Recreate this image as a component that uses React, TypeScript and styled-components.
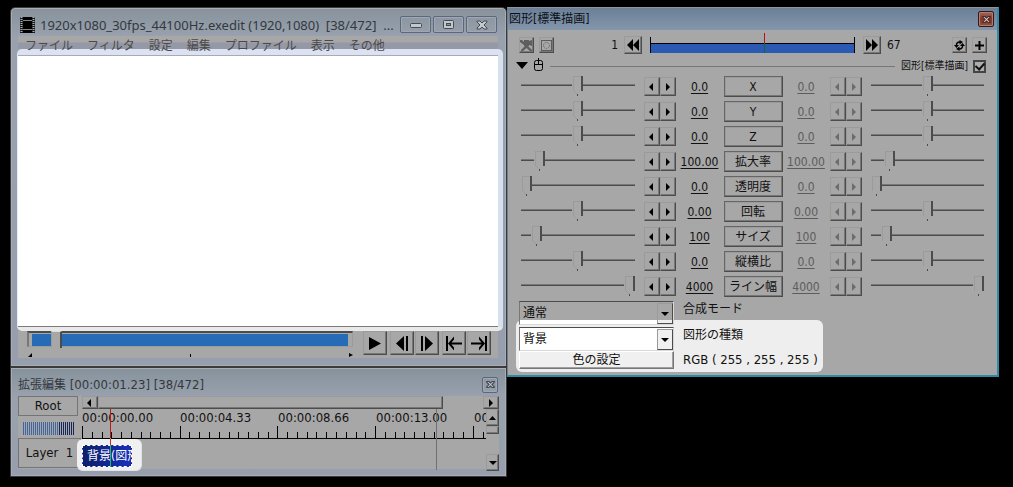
import React from "react";
import styled, { createGlobalStyle, css } from "styled-components";

const face = "#a7a7a7";
const dark = "#4c4c4c";
const mid = "#777777";
const light = "#9b9b9b";

const GlobalStyle = createGlobalStyle`
  * { box-sizing: border-box; }
  body {
    margin: 0;
    background: #000;
    color: #111;
    font-family: "DejaVu Sans Condensed", "Noto Sans CJK JP", sans-serif;
    font-size: 12px;
    line-height: 16px;
  }
  button, select, input { font: inherit; color: inherit; margin: 0; padding: 0; }
  svg { display: block; }
`;

const Desktop = styled.main`
  display: grid;
  grid-template-columns: 497fr 492fr;
  align-items: start;
  padding: 7px 14px 10px 10px;
`;

const Column = styled.div`
  min-width: 0;
`;

const glass = css`
  border: 1px solid #3a3a3a;
  box-shadow: inset 0 0 0 1px #a9adb1;
  color: #33383e;
`;

const PlayerWindow = styled.section`
  ${glass}
  border-radius: 5px 5px 0 0;
  background: linear-gradient(#87929c, #98a1ad 28px, #979fae);
  padding: 0 8px 8px 7px;
`;

const TimelineWindow = styled.section`
  ${glass}
  background: linear-gradient(#86929b, #98a1ad 28px, #979fae);
  padding: 0 7px 7px;
`;

const TitleBar = styled.header<{ $height: number }>`
  display: flex;
  align-items: center;
  height: ${(p) => p.$height}px;
  padding-top: 5px;
`;

const Title = styled.h1<{ $size?: number; $wide?: boolean }>`
  flex: 1;
  min-width: 0;
  margin: 0;
  font-family: ${(p) => (p.$wide ? '"Noto Sans", sans-serif' : "inherit")};
  font-size: ${(p) => p.$size ?? 12}px;
  font-weight: normal;
  line-height: 18px;
  white-space: pre;
`;

const TitleName = styled.span`
  font-size: 12px;
`;

const FilmIcon = styled.svg`
  margin: 0 5px 0 2px;
`;

const CaptionButtons = styled.div`
  display: flex;
  gap: 2px;
  padding: 0 1px 0 8px;
`;

const CaptionButton = styled.button<{ $w: number; $h: number; $danger?: boolean }>`
  display: grid;
  place-items: center;
  width: ${(p) => p.$w}px;
  height: ${(p) => p.$h}px;
  border: 1px solid ${(p) => (p.$danger ? "#3c1712" : "#5c6680")};
  border-radius: 2px;
  background: ${(p) => (p.$danger ? "linear-gradient(#a06a60, #8c3322 50%, #94513f)" : "transparent")};
  box-shadow: inset 0 0 0 1px ${(p) => (p.$danger ? "#a88078" : "#a0a8b2")};
`;

const MenuBar = styled.nav`
  position: relative;
  z-index: 1;
  display: flex;
  gap: 14px;
  height: 13px;
  padding-left: 7px;
  background: linear-gradient(${face} 6px, #9598a6 7px);
`;

const MenuItem = styled.button`
  height: 20px;
  border: 0;
  background: none;
  color: #4a4a4a;
  line-height: 20px;
  white-space: nowrap;
`;

const PreviewGlow = styled.div`
  margin: 0 -5px 0 -1px;
  padding: 6px 5px 4px 1px;
  border-radius: 5px;
  background: linear-gradient(#dce2f2 6px, transparent 6px, transparent 278px, #e9e9e9 278px),
    linear-gradient(90deg, #e6ecf8 1px, #fff 1px, #fff 50%, #d5e1ef 50%);
`;

const Preview = styled.div`
  height: 272px;
  border-top: 1px solid #a6abb6;
  border-bottom: 1px solid #7b7b7b;
  background: #fff;
`;

const Transport = styled.div`
  display: flex;
  justify-content: space-between;
  gap: 10px;
  height: 27px;
  padding: 0 7px 0 9px;
  background: ${face};
`;

const Seek = styled.div`
  flex: 1;
  min-width: 0;
`;

const SeekInput = styled.input`
  display: block;
  appearance: none;
  width: 100%;
  height: 16px;
  border: 1px solid ${light};
  border-width: 2px 1px 1px 2px;
  border-color: ${dark} ${light} ${light} ${mid};
  background: linear-gradient(#266bb5, #266bb5) 3px 1px / calc(100% - 7px) 12px no-repeat;
  outline: 0;
  &::-webkit-slider-thumb {
    appearance: none;
    width: 11px;
    height: 17px;
    margin-left: -3px;
    border: solid;
    border-width: 1px 2px 0 1px;
    border-color: #ddd ${dark} ${mid} ${light};
    background: ${face};
  }
`;

const SeekTicks = styled.div`
  display: flex;
  justify-content: space-between;
  padding: 6px 0 0 1px;
`;

const ButtonGroup = styled.div<{ $gap: number }>`
  display: flex;
  gap: ${(p) => p.$gap}px;
`;

const raised = css`
  border: 1px solid;
  border-color: ${light} ${dark} ${dark} ${light};
  background: ${face};
  box-shadow: inset -1px -1px 0 ${mid};
`;

const ToolButton = styled.button<{ $w: number; $h: number }>`
  ${raised}
  display: grid;
  place-items: center;
  flex: none;
  width: ${(p) => p.$w}px;
  height: ${(p) => p.$h}px;
`;

const TimelineBody = styled.div`
  display: grid;
  grid-template-columns: 64px 1fr;
  height: 73px;
  background: ${face};
  color: #111;
`;

const LayerColumn = styled.div`
  display: flex;
  flex-direction: column;
`;

const OutlineButton = styled.button<{ $w: number; $h: number }>`
  width: ${(p) => p.$w}px;
  height: ${(p) => p.$h}px;
  border: 1px solid #747474;
  background: ${face};
  font-size: 13px;
  white-space: pre;
`;

const ZoomMeter = styled.div`
  width: 51px;
  height: 13px;
  margin: 6px 0 3px 5px;
  background: repeating-linear-gradient(90deg, transparent 0 1px, ${face} 1px 2px),
    linear-gradient(90deg, #3f66a3 70%, #14265c 70%);
`;

const TrackColumn = styled.div`
  display: flex;
  flex-direction: column;
  min-width: 0;
`;

const ScrollRow = styled.div`
  display: flex;
  height: 13px;
`;

const ScrollThumb = styled.div`
  ${raised}
  flex: 345;
`;

const ScrollTrack = styled.div`
  flex: 40;
`;

const TrackArea = styled.div`
  display: flex;
  flex: 1;
  min-height: 0;
`;

const Tracks = styled.div`
  position: relative;
  flex: 1;
  min-width: 0;
`;

const Ruler = styled.div`
  height: 30px;
  overflow: hidden;
  border-bottom: 1px solid #000;
`;

const RulerLabels = styled.div`
  display: grid;
  grid-template-columns: repeat(5, 98px);
  height: 17px;
  font-size: 13px;
  line-height: 17px;
`;

const ClipGlow = styled.div`
  position: relative;
  width: 65px;
  height: 32px;
  margin-left: -5px;
  padding: 6px 5px;
  border-radius: 6px;
  background: #f0f0f0;
  border: 1px solid #dfe3e8;
  border-width: 0 1px 1px 0;
`;

const Clip = styled.div`
  width: 50px;
  height: 22px;
  padding-left: 4px;
  border: 1px dashed #fff;
  background: linear-gradient(90deg, #0e1f66, #1730bd);
  color: #fff;
  font-size: 12px;
  line-height: 20px;
  white-space: nowrap;
  overflow: hidden;
`;

const Playhead = styled.div`
  position: absolute;
  top: 0;
  left: 28px;
  width: 1px;
  height: 58px;
  background: linear-gradient(#c01818 29px, #30c8c8 29px, #30c8c8 30px, #e02020 30px, #e02020 36px, #18c060 36px);
`;

const EndMark = styled.div`
  position: absolute;
  top: 0;
  bottom: 1px;
  right: 49px;
  width: 1px;
  background: #707070;
`;

const VerticalScroll = styled.div`
  display: flex;
  flex-direction: column;
  flex: none;
  width: 13px;
`;

const VerticalThumb = styled.div`
  ${raised}
  height: 8px;
  margin-bottom: auto;
`;

const SettingsWindow = styled.section`
  min-width: 0;
  border: solid;
  border-width: 1px 2px 2px 1px;
  border-color: #8f959a #2f8aa6 #2f8aa6 #6e7f90;
  background: ${face};
  padding-bottom: 3px;
`;

const SettingsTitle = styled(TitleBar)`
  padding: 0 3px 0 1px;
  background: linear-gradient(#6b7f96, #8396ac);
  color: #0c1016;
`;

const FrameRow = styled.div`
  display: flex;
  align-items: center;
  height: 22px;
  margin-top: 4px;
  padding: 0 10px 0 11px;
`;

const FrameNumber = styled.span<{ $w: number; $right?: boolean }>`
  width: ${(p) => p.$w}px;
  padding: 0 6px;
  font-size: 12px;
  text-align: ${(p) => (p.$right ? "right" : "left")};
`;

const FrameBar = styled.div`
  position: relative;
  flex: 1;
  height: 16px;
  margin: 0 8px;
  border: solid #000;
  border-width: 0 1px;
  background: linear-gradient(transparent 6px, #000 6px, #000 7px, #2c59b2 7px);
`;

const FrameCursor = styled.div`
  position: absolute;
  top: -4px;
  left: 113px;
  width: 1px;
  height: 20px;
  background: linear-gradient(#b80f1c 10px, #1a6630 10px);
`;

const FilterRow = styled.div`
  display: flex;
  align-items: center;
  height: 16px;
  margin-top: 2px;
  padding: 0 11px 0 8px;
`;

const Rule = styled.hr`
  flex: 1;
  height: 1px;
  margin: 0 6px 0 4px;
  border: 0;
  background: ${mid};
`;

const FilterToggle = styled.label`
  display: flex;
  align-items: center;
  gap: 5px;
  font-size: 10px;
`;

const Check = styled.input`
  appearance: none;
  width: 13px;
  height: 13px;
  border: 2px solid #444;
  background: #adadad;
  display: grid;
  place-items: center;
  &:checked::after {
    content: "";
    width: 4px;
    height: 7px;
    margin-top: -2px;
    border: solid #111;
    border-width: 0 2px 2px 0;
    transform: rotate(42deg);
  }
`;

const ParamList = styled.div`
  padding: 0 13px;
`;

const ParamRow = styled.div`
  display: grid;
  grid-template-columns: 1fr 32px 48px 59px 47px 32px 1fr;
  height: 25px;
  padding-top: 3px;
`;

const Slider = styled.input<{ $end?: boolean }>`
  appearance: none;
  min-width: 0;
  height: 20px;
  width: calc(100% - 9px);
  margin-top: -1px;
  margin-left: ${(p) => (p.$end ? 9 : 0)}px;
  background: linear-gradient(${mid} 1px, ${dark} 1px) 0 8px / 100% 2px no-repeat;
  outline: 0;
  &::-webkit-slider-thumb {
    appearance: none;
    width: 11px;
    height: 20px;
    background: linear-gradient(${dark}, ${dark}) 9px 0 / 2px 15px no-repeat,
      linear-gradient(${light}, ${light}) 1px 0 / 1px 15px no-repeat,
      linear-gradient(${light}, ${light}) 1px 0 / 8px 1px no-repeat,
      linear-gradient(${dark}, ${dark}) 5px 18px / 1px 2px no-repeat,
      ${(p) =>
        p.$end
          ? ""
          : css`linear-gradient(45deg, transparent 42%, ${light} 42%, ${light} 58%, transparent 58%) 1px 14px / 5px 5px no-repeat,`}
      ${face};
  }
`;

const ValueCell = styled.output<{ $muted?: boolean }>`
  padding-top: 2px;
  color: ${(p) => (p.$muted ? "#5c5c5c" : "#111")};
  text-align: center;
  text-decoration: underline;
  text-underline-offset: 2px;
  font-size: 12px;
`;

const ParamButton = styled.button`
  height: 21px;
  border: 1px solid;
  border-color: #666 ${dark} ${dark} #666;
  margin-top: -1px;
  background: ${face};
  box-shadow: inset -1px -1px 0 ${mid}, inset 1px 1px 0 ${light};
  color: #111;
  line-height: 16px;
  white-space: nowrap;
`;

const Options = styled.div`
  padding: 2px 8px 0 11px;
`;

const OptionRow = styled.div<{ $h: number }>`
  position: relative;
  z-index: 1;
  display: grid;
  grid-template-columns: 155px 1fr;
  gap: 9px;
  height: ${(p) => p.$h}px;
`;

const OptionText = styled.label<{ $size?: number }>`
  font-size: ${(p) => p.$size ?? 12}px;
  line-height: 17px;
  white-space: pre;
`;

const SelectBox = styled.div<{ $h: number }>`
  position: relative;
  height: ${(p) => p.$h}px;
`;

const Select = styled.select<{ $split?: boolean }>`
  appearance: none;
  display: block;
  width: 100%;
  height: 100%;
  padding-left: 3px;
  border: 1px solid;
  border-color: ${dark} #d8d8d8 #d8d8d8 ${mid};
  border-radius: 0;
  background: ${(p) => (p.$split ? `linear-gradient(${face} 18px, #fff 18px)` : "#fff")};
  color: #111;
`;

const SelectArrow = styled.span<{ $split?: boolean }>`
  position: absolute;
  top: 2px;
  right: 1px;
  bottom: 1px;
  width: 16px;
  display: grid;
  place-items: center;
  border: 1px solid;
  border-color: ${light} ${dark} ${dark} ${light};
  background: ${(p) => (p.$split ? `linear-gradient(${face} 16px, #eee 16px)` : "#f0f0f0")};
  pointer-events: none;
`;

const OptionGlow = styled.div`
  width: 307px;
  margin: -7px 0 0 -3px;
  padding: 7px 3px 3px;
  border-radius: 6px;
  background: #eeeeee;
`;

const ColorButton = styled.button`
  height: 18px;
  border: 1px solid;
  border-color: #fff ${mid} ${mid} #fff;
  background: #f0f0f0;
  box-shadow: inset -1px -1px 0 #a0a0a0;
  line-height: 15px;
`;

const Arrow = ({ dir, color = "#000" }: { dir: "l" | "r" | "u" | "d"; color?: string }) => {
  const shapes = {
    l: "M5 0v8L1 4z",
    r: "M2 0v8l4-4z",
    u: "M0 6h7L3.5 2z",
    d: "M0 2h8L4 6z",
  };
  return (
    <svg width="8" height="8" aria-hidden="true">
      <path d={shapes[dir]} fill={color} />
    </svg>
  );
};

const CrossGlyph = ({ size, tone = "#454b54", fill = "#c4c8cc" }: { size: number; tone?: string; fill?: string }) => (
  <svg width={size} height={size} viewBox="0 0 12 10" aria-hidden="true">
    <path d="M1 1h3l2 2 2-2h3v1L8 5l3 3v1H8L6 7 4 9H1V8l3-3-3-3z" fill={fill} stroke={tone} strokeWidth={size < 12 ? 1.5 : 1} />
  </svg>
);

const transportIcons: [string, React.ReactNode][][] = [
  [["再生", <path key="p" d="M2 2v13l12-6.500z" />]],
  [
    ["前のフレーム", <path key="p" d="M10 1v15L2 8.500zM12 1h2v15h-2z" />],
    ["次のフレーム", <path key="p" d="M6 1v15l8-7.500zM2 1h2v15H2z" />],
  ],
  [
    ["先頭へ", <path key="p" d="M0 1h2v15H0zM2 8.500l6-7v3L5.500 7.500H16v2H5.500L8 12.500v3z" />],
    ["末尾へ", <path key="p" d="M14 1h2v15h-2zM14 8.500l-6-7v3l2.500 3H0v2h10.500L8 12.500v3z" />],
  ],
];

const ticks = Array.from({ length: 60 }, (_, i) => i);
const labels = ["00:00:00.00", "00:00:04.33", "00:00:08.66", "00:00:13.00", "00:00:17.33"];
const menus = ["ファイル", "フィルタ", "設定", "編集", "プロファイル", "表示", "その他"];

const params = [
  { name: "X", value: "0.0", at: 50 },
  { name: "Y", value: "0.0", at: 50 },
  { name: "Z", value: "0.0", at: 50 },
  { name: "拡大率", value: "100.00", at: 13 },
  { name: "透明度", value: "0.0", at: 0 },
  { name: "回転", value: "0.00", at: 50 },
  { name: "サイズ", value: "100", at: 10 },
  { name: "縦横比", value: "0.0", at: 50 },
  { name: "ライン幅", value: "4000", at: 100 },
];

const Steppers = ({ name, muted }: { name: string; muted?: boolean }) => (
  <ButtonGroup $gap={0}>
    <ToolButton $w={16} $h={19} aria-label={`${name} 減`}>
      <Arrow dir="l" color={muted ? "#6c6c6c" : "#000"} />
    </ToolButton>
    <ToolButton $w={16} $h={19} aria-label={`${name} 増`}>
      <Arrow dir="r" color={muted ? "#6c6c6c" : "#000"} />
    </ToolButton>
  </ButtonGroup>
);

const Player = () => (
  <PlayerWindow>
    <TitleBar $height={28}>
      <FilmIcon width="15" height="16" aria-hidden="true">
        <path d="M0 0h15v16H0z" fill="#1a1a1a" />
        <path d="M3 0h9v3H3zM3 4h9v8H3zM3 13h9v3H3z" fill="#000" />
        <path d="M3 3.500h9M3 12.500h9" stroke="#888" />
        <path d="M1.500 0v16M13.500 0v16" stroke="#a9adb0" strokeWidth="2" strokeDasharray="1 1" />
      </FilmIcon>
      <Title $size={13} $wide>1920x1080_30fps_44100Hz.exedit (1920,1080)  [38/472]  ...</Title>
      <CaptionButtons>
        <CaptionButton $w={31} $h={17} aria-label="最小化">
          <svg width="12" height="6">
            <rect x="0.500" y="1.500" width="11" height="4" rx="1" fill="#c4c8cc" stroke="#454b54" />
          </svg>
        </CaptionButton>
        <CaptionButton $w={31} $h={17} aria-label="最大化">
          <svg width="11" height="9">
            <rect x="0.500" y="0.500" width="10" height="8" rx="1" fill="#c4c8cc" stroke="#454b54" />
            <rect x="3.500" y="3.500" width="4" height="2" fill="#8f99a2" stroke="#454b54" />
          </svg>
        </CaptionButton>
        <CaptionButton $w={31} $h={17} aria-label="閉じる">
          <CrossGlyph size={12} />
        </CaptionButton>
      </CaptionButtons>
    </TitleBar>
    <MenuBar>
      {menus.map((m) => (
        <MenuItem key={m}>{m}</MenuItem>
      ))}
    </MenuBar>
    <PreviewGlow>
      <Preview />
    </PreviewGlow>
    <Transport>
      <Seek>
        <SeekInput type="range" min={0} max={472} defaultValue={38} aria-label="再生位置" />
        <SeekTicks aria-hidden="true">
          <svg width="4" height="4"><path d="M4 0v4H0z" /></svg>
          <svg width="2" height="4"><path d="M0 1h1v3H0z" /></svg>
          <svg width="4" height="4"><path d="M0 0v4l4-2z" /></svg>
        </SeekTicks>
      </Seek>
      <ButtonGroup $gap={3}>
        {transportIcons.map((group, i) => (
          <ButtonGroup key={i} $gap={1}>
            {group.map(([label, shape]) => (
              <ToolButton key={label} $w={24} $h={24} aria-label={label}>
                <svg width="16" height="17">{shape}</svg>
              </ToolButton>
            ))}
          </ButtonGroup>
        ))}
      </ButtonGroup>
    </Transport>
  </PlayerWindow>
);

const Timeline = () => (
  <TimelineWindow>
    <TitleBar $height={28}>
      <Title $size={13}>
        <TitleName>拡張編集</TitleName> [00:00:01.23] [38/472]
      </Title>
      <CaptionButtons>
        <CaptionButton $w={16} $h={16} aria-label="閉じる">
          <CrossGlyph size={9} />
        </CaptionButton>
      </CaptionButtons>
    </TitleBar>
    <TimelineBody>
      <LayerColumn>
        <OutlineButton $w={60} $h={20}>Root</OutlineButton>
        <ZoomMeter />
        <OutlineButton $w={63} $h={30}>Layer  1</OutlineButton>
      </LayerColumn>
      <TrackColumn>
        <ScrollRow>
          <ToolButton $w={16} $h={13} aria-label="左へ"><Arrow dir="l" /></ToolButton>
          <ScrollThumb />
          <ScrollTrack />
          <ToolButton $w={16} $h={13} aria-label="右へ"><Arrow dir="r" /></ToolButton>
        </ScrollRow>
        <TrackArea>
          <Tracks>
            <Ruler>
              <RulerLabels>
                {labels.map((l) => (
                  <span key={l}>{l}</span>
                ))}
              </RulerLabels>
              <svg width="100%" height="12" aria-hidden="true">
                {ticks.map((i) => (
                  <rect key={i} x={Math.round(i * 9.77)} y={i % 10 ? 6 : 0} width="1" height="12" />
                ))}
              </svg>
            </Ruler>
            <ClipGlow>
              <Clip>背景(図形)</Clip>
            </ClipGlow>
            <Playhead />
            <EndMark />
          </Tracks>
          <VerticalScroll>
            <ToolButton $w={13} $h={17} aria-label="上へ"><Arrow dir="u" /></ToolButton>
            <VerticalThumb />
            <ToolButton $w={13} $h={17} aria-label="下へ"><Arrow dir="d" /></ToolButton>
          </VerticalScroll>
        </TrackArea>
      </TrackColumn>
    </TimelineBody>
  </TimelineWindow>
);

const Settings = () => (
  <SettingsWindow>
    <SettingsTitle $height={22}>
      <Title>図形[標準描画]</Title>
      <CaptionButton $w={16} $h={16} $danger aria-label="閉じる">
        <CrossGlyph size={9} tone="#4a2a28" fill="#cfcfcf" />
      </CaptionButton>
    </SettingsTitle>
    <FrameRow>
      <ButtonGroup $gap={5}>
        <ToolButton $w={15} $h={16} aria-label="カメラ制御">
          <svg width="13" height="13" fill="#5e5e5e">
            <path d="M4 1h5v1l3-1v6L9 6v1H4zM0 1h2l2 2v3L0 3zM5 7h3l4 4v1h-2L6.500 9 3 12H1v-1z" />
          </svg>
        </ToolButton>
        <ToolButton $w={15} $h={16} aria-label="クリッピング">
          <svg width="11" height="11" fill="none" stroke="#5c5c5c">
            <rect x="0.500" y="0.500" width="10" height="10" />
            <circle cx="5.500" cy="5.500" r="3" strokeDasharray="1 1" />
          </svg>
        </ToolButton>
      </ButtonGroup>
      <FrameNumber $w={70} $right>1</FrameNumber>
      <ToolButton $w={18} $h={18} aria-label="前の区間">
        <svg width="14" height="12"><path d="M7 0v12L1 6zM13 0v12L7 6z" /></svg>
      </ToolButton>
      <FrameBar>
        <FrameCursor />
      </FrameBar>
      <ToolButton $w={18} $h={18} aria-label="次の区間">
        <svg width="14" height="12"><path d="M1 0v12l6-6zM7 0v12l6-6z" /></svg>
      </ToolButton>
      <FrameNumber $w={71}>67</FrameNumber>
      <ButtonGroup $gap={5}>
        <ToolButton $w={15} $h={16} aria-label="更新">
          <svg width="11" height="11" fill="none" stroke="#000" strokeWidth="1.5">
            <path d="M6 2Q2 2 2.500 6M5 9q4 0 3.500-4" />
            <path d="M5.500 0v4.500L9 2zM5.500 6.500V11L2 9z" fill="#000" stroke="none" />
            <path d="M0 5h5L2.500 8zM6 6h5L8.500 3z" fill="#000" stroke="none" />
          </svg>
        </ToolButton>
        <ToolButton $w={15} $h={16} aria-label="追加">
          <svg width="9" height="9"><path d="M3.500 0h2v3.500H9v2H5.500V9h-2V5.500H0v-2h3.500z" /></svg>
        </ToolButton>
      </ButtonGroup>
    </FrameRow>
    <FilterRow>
      <svg width="30" height="16" aria-hidden="true">
        <path d="M0 4h12L6 11z" />
        <path d="M20.500 2.500h4q2 0 2 2v6q0 2-2 2h-4q-2 0-2-2v-6q0-2 2-2zM18 6.500h9M22.500 0v7" fill="none" stroke="#000" />
      </svg>
      <Rule />
      <FilterToggle>
        図形[標準描画]
        <Check type="checkbox" defaultChecked />
      </FilterToggle>
    </FilterRow>
    <ParamList>
      {params.map((p) => (
        <ParamRow key={p.name}>
          <Slider type="range" defaultValue={p.at} aria-label={`${p.name} 開始`} />
          <Steppers name={p.name} />
          <ValueCell>{p.value}</ValueCell>
          <ParamButton>{p.name}</ParamButton>
          <ValueCell $muted>{p.value}</ValueCell>
          <Steppers name={p.name} muted />
          <Slider type="range" defaultValue={p.at} $end aria-label={`${p.name} 終了`} />
        </ParamRow>
      ))}
    </ParamList>
    <Options>
      <OptionRow $h={26}>
        <SelectBox $h={24}>
          <Select id="blend" $split defaultValue="通常">
            <option>通常</option>
            <option>加算</option>
          </Select>
          <SelectArrow $split><Arrow dir="d" /></SelectArrow>
        </SelectBox>
        <OptionText htmlFor="blend">合成モード</OptionText>
      </OptionRow>
      <OptionGlow>
        <OptionRow $h={24}>
          <SelectBox $h={24}>
            <Select id="shape" defaultValue="背景">
              <option>背景</option>
              <option>円</option>
            </Select>
            <SelectArrow><Arrow dir="d" /></SelectArrow>
          </SelectBox>
          <OptionText htmlFor="shape">図形の種類</OptionText>
        </OptionRow>
        <OptionRow $h={18}>
          <ColorButton id="color">色の設定</ColorButton>
          <OptionText htmlFor="color" $size={13}>RGB ( 255 , 255 , 255 )</OptionText>
        </OptionRow>
      </OptionGlow>
    </Options>
  </SettingsWindow>
);

export default function App() {
  return (
    <>
      <GlobalStyle />
      <Desktop>
        <Column>
          <Player />
          <Timeline />
        </Column>
        <Settings />
      </Desktop>
    </>
  );
}
